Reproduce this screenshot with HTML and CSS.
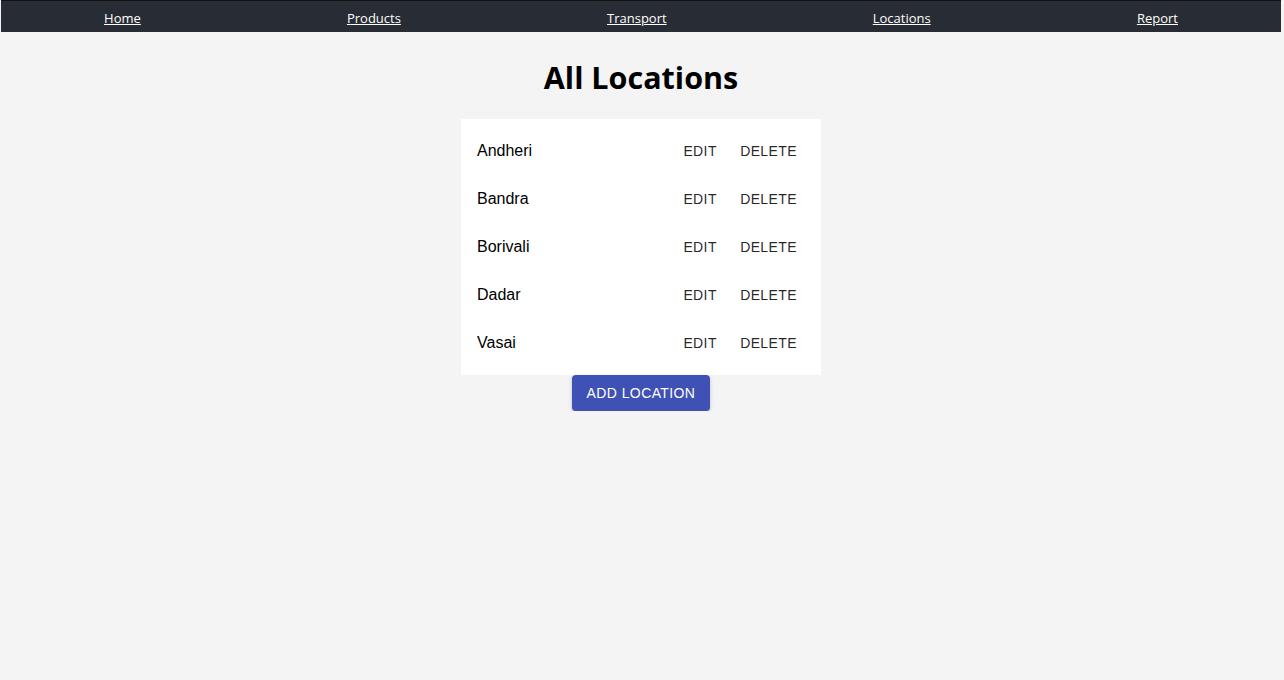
FILE: index.html
```html
<!DOCTYPE html>
<html>
<head>
<meta charset="utf-8">
<link rel="stylesheet" href="styles.css">
</head>
<body>
<nav class="nav">
  <a href="#" class="nav-link">Home</a>
  <a href="#" class="nav-link">Products</a>
  <a href="#" class="nav-link">Transport</a>
  <a href="#" class="nav-link">Locations</a>
  <a href="#" class="nav-link">Report</a>
</nav>
<main class="main">
  <h1 class="title">All Locations</h1>
  <ul class="list">
    <li class="item"><span class="name">Andheri</span><span class="actions"><button class="tbtn">Edit</button><button class="tbtn">Delete</button></span></li>
    <li class="item"><span class="name">Bandra</span><span class="actions"><button class="tbtn">Edit</button><button class="tbtn">Delete</button></span></li>
    <li class="item"><span class="name">Borivali</span><span class="actions"><button class="tbtn">Edit</button><button class="tbtn">Delete</button></span></li>
    <li class="item"><span class="name">Dadar</span><span class="actions"><button class="tbtn">Edit</button><button class="tbtn">Delete</button></span></li>
    <li class="item"><span class="name">Vasai</span><span class="actions"><button class="tbtn">Edit</button><button class="tbtn">Delete</button></span></li>
  </ul>
  <button class="add">Add Location</button>
</main>
</body>
</html>
```

FILE: styles.css
```css
html, body {
  margin: 0;
  padding: 0;
  background: #f4f4f4;
}
body {
  font-family: "Open Sans", "Noto Sans", sans-serif;
}
.nav {
  margin: 0 3px 0 1px;
  height: 32px;
  background: #282c34;
  border-top: 1px solid #111;
  display: flex;
  justify-content: space-around;
  align-items: center;
  box-sizing: border-box;
}
.nav-link {
  color: #fff;
  font-size: 13px;
  text-decoration: underline;
  line-height: 20px;
  padding-top: 2px;
}
.main {
  margin: 0 3px 0 1px;
  display: flex;
  flex-direction: column;
  align-items: center;
}
.title {
  margin: 25px 0 22px;
  font-size: 30.5px;
  font-weight: 700;
  line-height: 40px;
  color: #000;
}
.list {
  list-style: none;
  margin: 0;
  padding: 8px 0;
  width: 360px;
  background: #fff;
}
.item {
  height: 48px;
  display: flex;
  align-items: center;
  justify-content: space-between;
  padding: 0 16px;
  box-sizing: border-box;
}
.name {
  font-family: "Liberation Sans", Arial, sans-serif;
  font-size: 16px;
  color: #000;
}
.actions {
  display: flex;
}
.tbtn {
  font-family: "Liberation Sans", Arial, sans-serif;
  font-size: 14px;
  text-transform: uppercase;
  letter-spacing: 0.02857em;
  color: rgba(0, 0, 0, 0.87);
  background: none;
  border: 0;
  padding: 6px 8px;
  min-width: 64px;
  line-height: 24px;
  cursor: pointer;
}
.add {
  font-family: "Liberation Sans", Arial, sans-serif;
  font-size: 14px;
  text-transform: uppercase;
  letter-spacing: 0.02857em;
  color: #fff;
  background: #3f51b5;
  border: 0;
  border-radius: 4px;
  padding: 6px 15px;
  line-height: 24px;
  box-shadow: 0 3px 1px -2px rgba(0,0,0,0.2), 0 2px 2px 0 rgba(0,0,0,0.14), 0 1px 5px 0 rgba(0,0,0,0.12);
}
```
